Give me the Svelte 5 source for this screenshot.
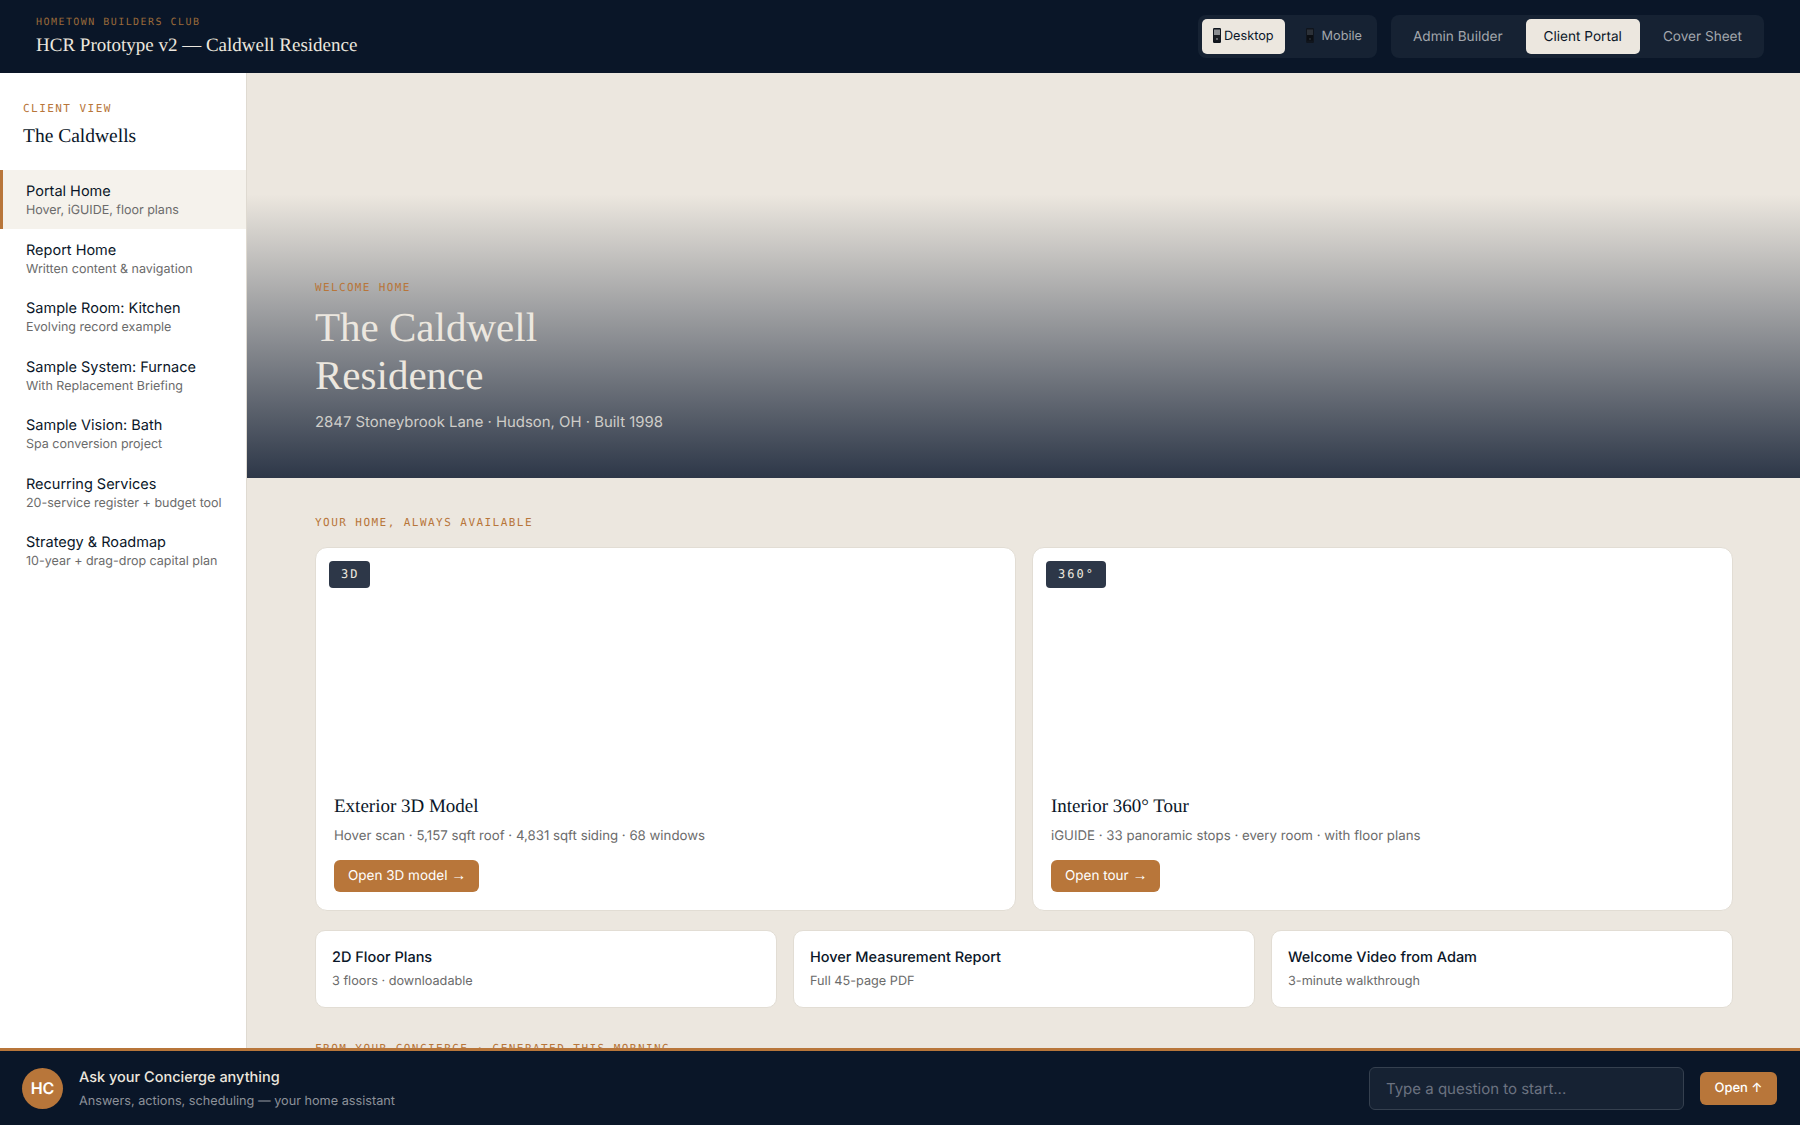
<script>
  const navItems = [
    { title: 'Portal Home', sub: 'Hover, iGUIDE, floor plans', active: true },
    { title: 'Report Home', sub: 'Written content & navigation' },
    { title: 'Sample Room: Kitchen', sub: 'Evolving record example' },
    { title: 'Sample System: Furnace', sub: 'With Replacement Briefing' },
    { title: 'Sample Vision: Bath', sub: 'Spa conversion project' },
    { title: 'Recurring Services', sub: '20-service register + budget tool' },
    { title: 'Strategy & Roadmap', sub: '10-year + drag-drop capital plan' }
  ];

  const bigCards = [
    { badge: '3D', title: 'Exterior 3D Model', text: 'Hover scan · 5,157 sqft roof · 4,831 sqft siding · 68 windows', cta: 'Open 3D model' },
    { badge: '360°', title: 'Interior 360° Tour', text: 'iGUIDE · 33 panoramic stops · every room · with floor plans', cta: 'Open tour' }
  ];

  const smallCards = [
    { title: '2D Floor Plans', text: '3 floors · downloadable' },
    { title: 'Hover Measurement Report', text: 'Full 45-page PDF' },
    { title: 'Welcome Video from Adam', text: '3-minute walkthrough' }
  ];
</script>

{#snippet phone(screen, top)}
  <svg class="phone" viewBox="0 0 8 15" width="8" height="15" aria-hidden="true">
    <rect width="8" height="15" rx="1.2" fill="#10151d" />
    <rect x="1" y="1.5" width="6" height="5.5" fill={top} />
    <rect x="1" y="7" width="6" height="5.5" fill={screen} />
    <circle cx="4" cy="11" r="0.9" fill={top} />
  </svg>
{/snippet}

<div class="app">
  <header class="topbar">
    <div>
      <div class="eyebrow">HOMETOWN BUILDERS CLUB</div>
      <div class="brand">HCR Prototype v2 — Caldwell Residence</div>
    </div>
    <div class="switches">
      <div class="seg small">
        <button class="on">{@render phone('#1a1d22', '#8b8d90')}Desktop</button>
        <button>{@render phone('#0b0e13', '#2c3138')}Mobile</button>
      </div>
      <div class="seg">
        <button>Admin Builder</button>
        <button class="on">Client Portal</button>
        <button>Cover Sheet</button>
      </div>
    </div>
  </header>

  <div class="body">
    <aside class="sidebar">
      <div class="side-head">
        <div class="side-label">CLIENT VIEW</div>
        <div class="side-name">The Caldwells</div>
      </div>
      <nav>
        {#each navItems as item}
          <div class="nav-item" class:active={item.active}>
            <div class="nav-title">{item.title}</div>
            <div class="nav-sub">{item.sub}</div>
          </div>
        {/each}
      </nav>
    </aside>

    <main class="main">
      <section class="hero">
        <div class="hero-label">WELCOME HOME</div>
        <h1>The Caldwell<br />Residence</h1>
        <p>2847 Stoneybrook Lane · Hudson, OH · Built 1998</p>
      </section>

      <section class="content">
        <div class="section-label">YOUR HOME, ALWAYS AVAILABLE</div>
        <div class="big-grid">
          {#each bigCards as card}
            <div class="big-card">
              <div class="viewer"><span class="badge">{card.badge}</span></div>
              <div class="big-body">
                <h3>{card.title}</h3>
                <p>{card.text}</p>
                <button class="cta">{card.cta} <span class="arrow">→</span></button>
              </div>
            </div>
          {/each}
        </div>
        <div class="small-grid">
          {#each smallCards as card}
            <div class="small-card">
              <div class="small-title">{card.title}</div>
              <div class="small-text">{card.text}</div>
            </div>
          {/each}
        </div>
        <div class="section-label next">FROM YOUR CONCIERGE · GENERATED THIS MORNING</div>
      </section>
    </main>
  </div>

  <footer class="concierge">
    <div class="avatar">HC</div>
    <div class="ask">
      <div class="ask-title">Ask your Concierge anything</div>
      <div class="ask-sub">Answers, actions, scheduling — your home assistant</div>
    </div>
    <input class="ask-input" placeholder="Type a question to start..." />
    <button class="open">Open ↑</button>
  </footer>
</div>

<style>
  :global(body) {
    margin: 0;
    background: #ece7df;
    font-family: Inter, 'Liberation Sans', sans-serif;
    text-rendering: geometricPrecision;
  }

  button,
  input {
    text-rendering: geometricPrecision;
  }

  .app {
    height: 1125px;
    display: flex;
    flex-direction: column;
    overflow: hidden;
  }

  .topbar {
    height: 73px;
    flex: none;
    box-sizing: border-box;
    background: #0a1628;
    display: flex;
    align-items: center;
    justify-content: space-between;
    padding: 0 36px;
  }

  .eyebrow {
    font-family: 'DejaVu Sans Mono', monospace;
    font-size: 10px;
    letter-spacing: 1.45px;
    color: #9a6a3a;
    line-height: 14px;
    margin-bottom: 3px;
    margin-top: 1px;
  }

  .brand {
    font-family: 'Liberation Serif', serif;
    font-size: 19px;
    line-height: 26px;
    color: #ece7df;
  }

  .switches {
    display: flex;
    gap: 14px;
  }

  .seg {
    display: flex;
    gap: 5px;
    padding: 4px;
    background: #162233;
    border-radius: 8px;
  }

  .seg button {
    border: none;
    background: transparent;
    font-family: inherit;
    font-size: 13.6px;
    color: #a3a7ad;
    padding: 0 18px;
    height: 35px;
    border-radius: 5px;
  }

  .seg button.on {
    background: #ece7df;
    color: #0a1628;
  }

  .seg.small {
    gap: 4px;
  }

  .seg.small button {
    font-size: 12.7px;
    padding: 0 11px;
    display: flex;
    align-items: center;
    gap: 3px;
  }

  .seg.small button:last-child {
    padding-left: 17px;
    gap: 8px;
  }

  .phone {
    margin-top: -3px;
  }

  .body {
    flex: 1;
    min-height: 0;
    display: flex;
  }

  .sidebar {
    width: 247px;
    flex: none;
    box-sizing: border-box;
    background: #fff;
    border-right: 1px solid #dfdad1;
  }

  .side-head {
    padding: 29px 23px 22px;
    height: 97px;
    box-sizing: border-box;
  }

  .side-label {
    font-family: 'DejaVu Sans Mono', monospace;
    font-size: 11px;
    letter-spacing: 1.45px;
    line-height: 14px;
    color: #b8763a;
  }

  .side-name {
    font-family: 'Liberation Serif', serif;
    font-size: 19.5px;
    line-height: 26px;
    margin-top: 8px;
    color: #0a1628;
  }

  .nav-item {
    height: 58.5px;
    box-sizing: border-box;
    padding: 12px 0 0 23px;
    border-left: 3px solid transparent;
    white-space: nowrap;
  }

  .nav-item.active {
    background: #f5f2ec;
    border-left-color: #b8763a;
  }

  .nav-title {
    font-size: 14.5px;
    line-height: 20px;
    color: #0a1628;
  }

  .nav-sub {
    font-size: 12.5px;
    line-height: 17px;
    color: #6b6b6b;
  }

  .main {
    flex: 1;
    min-width: 0;
    overflow: hidden;
  }

  .hero {
    height: 405px;
    box-sizing: border-box;
    padding: 208px 68px 0;
    background: linear-gradient(to bottom, #ece7df 30%, #2d3748 100%);
  }

  .hero-label {
    font-family: 'DejaVu Sans Mono', monospace;
    font-size: 11px;
    letter-spacing: 1.35px;
    line-height: 14px;
    color: #b8763a;
  }

  h1 {
    margin: 8px 0 0;
    font-family: 'Liberation Serif', serif;
    font-weight: 400;
    font-size: 41px;
    line-height: 48px;
    color: #ece7df;
  }

  .hero p {
    margin: 12px 0 0;
    font-size: 14.9px;
    line-height: 22px;
    color: #cfcdc9;
  }

  .content {
    padding: 38px 67px 0 68px;
  }

  .section-label {
    font-family: 'DejaVu Sans Mono', monospace;
    font-size: 11px;
    letter-spacing: 1.45px;
    line-height: 14px;
    color: #b8763a;
  }

  .section-label.next {
    margin-top: 34px;
  }

  .big-grid {
    display: grid;
    grid-template-columns: 1fr 1fr;
    gap: 16px;
    margin-top: 17px;
  }

  .big-card {
    height: 364px;
    box-sizing: border-box;
    background: #fff;
    border: 1px solid #e2ddd4;
    border-radius: 12px;
    display: flex;
    flex-direction: column;
    overflow: hidden;
  }

  .viewer {
    height: 246px;
    padding: 13px;
    box-sizing: border-box;
  }

  .badge {
    display: inline-block;
    background: #2d3748;
    color: #ece7df;
    font-family: 'DejaVu Sans Mono', monospace;
    font-size: 12px;
    letter-spacing: 2px;
    line-height: 27px;
    padding: 0 11px 0 12px;
    border-radius: 4px;
  }

  .big-body {
    padding: 0 18px;
  }

  .big-body h3 {
    margin: 0;
    font-family: 'Liberation Serif', serif;
    font-weight: 400;
    font-size: 19px;
    line-height: 26px;
    color: #0a1628;
  }

  .big-body p {
    margin: 6px 0 0;
    font-size: 13.25px;
    line-height: 20px;
    color: #6b6b6b;
  }

  .cta {
    margin-top: 14px;
    height: 32px;
    padding: 0 13px 0 14px;
    border: none;
    border-radius: 6px;
    background: #b8763a;
    color: #fff;
    font-family: inherit;
    font-size: 13.5px;
  }

  .arrow {
    font-family: 'Liberation Sans', sans-serif;
    font-size: 15px;
    line-height: 1;
  }

  .small-grid {
    display: grid;
    grid-template-columns: repeat(3, 1fr);
    gap: 16px;
    margin-top: 19px;
  }

  .small-card {
    height: 78px;
    box-sizing: border-box;
    padding: 17px 16px 0;
    background: #fff;
    border: 1px solid #e2ddd4;
    border-radius: 10px;
  }

  .small-title {
    font-size: 14.5px;
    line-height: 20px;
    font-weight: 500;
    color: #0a1628;
  }

  .small-text {
    font-size: 12.7px;
    line-height: 18px;
    margin-top: 5px;
    color: #6b6b6b;
  }

  .concierge {
    height: 77px;
    flex: none;
    box-sizing: border-box;
    border-top: 3px solid #b8763a;
    background: #0a1628;
    display: flex;
    align-items: center;
    padding: 0 23px 0 22px;
  }

  .avatar {
    width: 41px;
    height: 41px;
    border-radius: 50%;
    background: #b8763a;
    color: #fff;
    font-size: 16px;
    font-weight: 600;
    display: flex;
    align-items: center;
    justify-content: center;
    margin-right: 16px;
  }

  .ask {
    flex: 1;
    margin-top: 2px;
  }

  .ask-title {
    font-size: 14.5px;
    font-weight: 500;
    line-height: 20px;
    color: #ece7df;
  }

  .ask-sub {
    font-size: 12.7px;
    line-height: 18px;
    margin-top: 5px;
    color: #8d929a;
  }

  .ask-input {
    width: 315px;
    height: 43px;
    box-sizing: border-box;
    background: #162233;
    border: 1px solid #35404f;
    border-radius: 6px;
    padding: 0 16px;
    font-family: inherit;
    font-size: 15px;
    color: #fff;
  }

  .ask-input::placeholder {
    color: #6b7280;
  }

  .open {
    margin-left: 16px;
    height: 33px;
    padding: 0 14.5px;
    border: none;
    border-radius: 6px;
    background: #b8763a;
    color: #fff;
    font-family: inherit;
    font-size: 13px;
    font-weight: 500;
  }
</style>
